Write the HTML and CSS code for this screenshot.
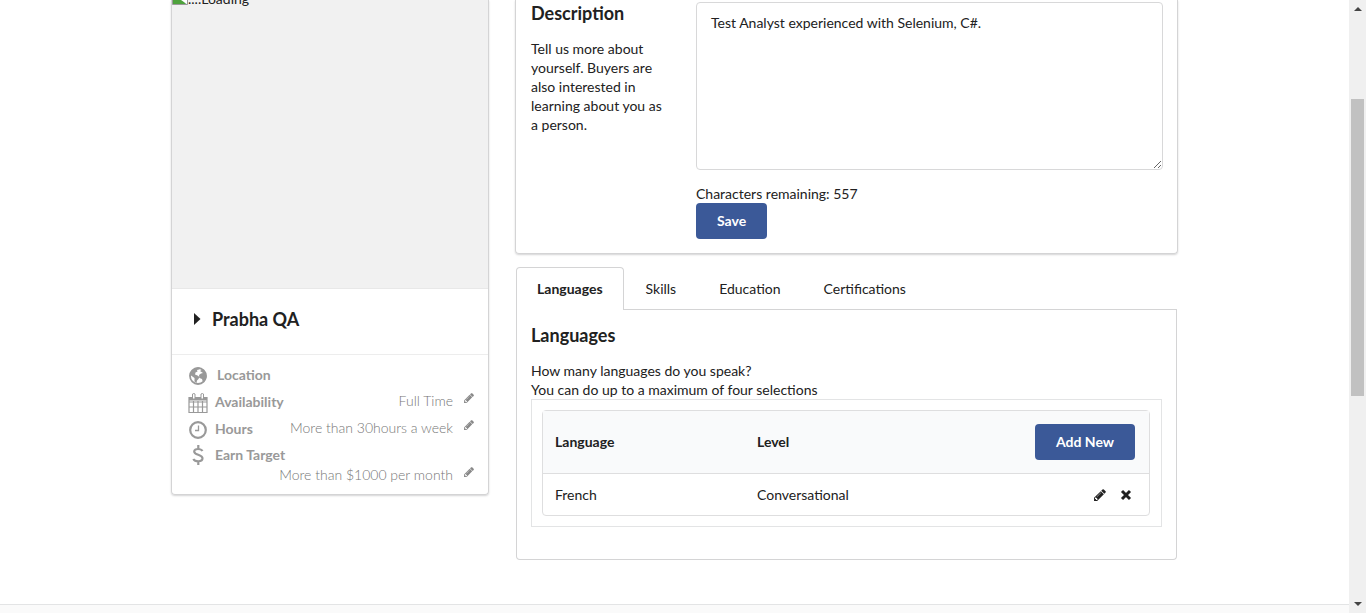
FILE: index.html
```html
<!DOCTYPE html>
<html lang="en">
<head>
<meta charset="utf-8">
<title>Profile</title>
<link rel="stylesheet" href="styles.css">
</head>
<body>
<svg class="defs" width="0" height="0" aria-hidden="true">
  <symbol id="pencil" viewBox="0 1 12.500 12.600"><path fill-rule="evenodd" d="M3.100 12.600l.8-.8L1.800 9.700l-.8.800v1.100h1v1zM7.500 4.750q0-.2-.2-.2l-.1.100L2.900 8.900v.1q0 .2.200.2l.1-.1L7.400 4.900zM7.060 3.250l3.250 3.250L3.250 13.560H0V10.310zM12.400 4q0 .4-.3.700L10.810 6 7.560 2.750l1.300-1.290q.3-.3.700-.3.400 0 .7.300l1.840 1.830q.3.300.3.710z"/></symbol>
</svg>
<div class="page">
  <main class="content">
    <div class="columns">
      <aside class="card">
        <div class="photo">
          <svg class="broken" width="16" height="16" viewBox="0 0 16 16" aria-hidden="true"><path fill="#c4d4ee" stroke="#999" d="M.5.500h15v15H.500z"/><path fill="#4ea23c" d="M1 7l4-2 9 10H1z"/><path fill="#fff" d="M6 9l9 6V9z"/></svg><span>....Loading</span>
        </div>
        <div class="name">
          <svg class="caret" width="7" height="12" viewBox="0 0 7 12" aria-hidden="true"><path d="M0 0l6.500 6L0 12z"/></svg>
          <h2 class="heading">Prabha QA</h2>
        </div>
        <ul class="details">
          <li class="detail">
            <svg class="icon" viewBox="0 0 20 20" aria-hidden="true"><circle cx="10" cy="10" r="8" fill="none" stroke="currentColor" stroke-width="1.800"/><path fill="currentColor" d="M3 5l4-3 5-.5-1 2-2 .5.500 1.500-2 1-.5 2 2.500 1 2 1.500-1 2-1.500 1.500-.5 2.500-2-1.500V12L3 9.500 1.500 10zM12 5l3-2 2.500 3 1.200 5-1.700 4-2 1.500-1-3.500-2.500-1-.5-3 2-1.500 2-.5z"/></svg>
            <strong class="label first">Location</strong>
          </li>
          <li class="detail">
            <svg class="icon" viewBox="0 0 20 20" aria-hidden="true"><path fill="none" stroke="currentColor" stroke-width="1.200" d="M1 4.500h18v15H1zM1 9h18M1 14h18M5.500 8v11M10 8v11M14.500 8v11"/><path fill="currentColor" d="M1 4h18v3.500H1z"/><path fill="#fff" stroke="currentColor" d="M4.500 1q1.500-1 2.500 0v5H4.500zM13 1q1.500-1 2.500 0v5H13z"/></svg>
            <strong class="label">Availability</strong>
            <span class="value">Full Time</span><button class="edit" aria-label="Edit availability"><svg class="pen"><use href="#pencil"/></svg></button>
          </li>
          <li class="detail">
            <svg class="icon" viewBox="0 0 20 20" aria-hidden="true"><circle cx="10" cy="10" r="7.800" fill="none" stroke="currentColor" stroke-width="2.200"/><path fill="none" stroke="currentColor" stroke-width="1.300" d="M10.500 5.500v5H7"/></svg>
            <strong class="label">Hours</strong>
            <span class="value">More than 30hours a week</span><button class="edit" aria-label="Edit hours"><svg class="pen"><use href="#pencil"/></svg></button>
          </li>
          <li class="detail wrap">
            <svg class="icon" viewBox="0 0 20 20" aria-hidden="true"><path fill="none" stroke="currentColor" stroke-width="2.200" d="M14.500 6C13 3.500 6.200 3 6.200 6.500c0 4 8.300 2.500 8.300 6.800 0 4-7.500 3.700-9.200.7M10.300 0v4M10.300 16v4"/></svg>
            <strong class="label">Earn Target</strong>
            <span class="value">More than $1000 per month</span><button class="edit" aria-label="Edit earn target"><svg class="pen"><use href="#pencil"/></svg></button>
          </li>
        </ul>
      </aside>
      <div class="main-column">
        <section class="description">
          <div class="intro">
            <h3 class="heading"><label for="about">Description</label></h3>
            <p class="text">Tell us more about yourself. Buyers are also interested in learning about you as a person.</p>
          </div>
          <div class="editor">
            <textarea class="about" id="about">Test Analyst experienced with Selenium, C#.</textarea>
            <p class="text">Characters remaining: 557</p>
            <button class="button">Save</button>
          </div>
        </section>
        <section class="tabbed">
          <nav class="tabs">
            <a class="tab active" href="#languages">Languages</a>
            <a class="tab" href="#skills">Skills</a>
            <a class="tab" href="#education">Education</a>
            <a class="tab" href="#certifications">Certifications</a>
          </nav>
          <div class="panel" id="languages">
            <h3 class="heading">Languages</h3>
            <p class="text">How many languages do you speak?<br>You can do up to a maximum of four selections</p>
            <div class="frame">
              <table class="table">
                <thead><tr><th class="third">Language</th><th class="third">Level</th><th class="right"><button class="button">Add New</button></th></tr></thead>
                <tbody><tr><td>French</td><td>Conversational</td><td class="right"><div class="actions">
                  <button class="action" aria-label="Edit French"><svg class="glyph"><use href="#pencil"/></svg></button>
                  <button class="action" aria-label="Delete French"><svg class="glyph cross" viewBox="0 0 12 12"><path d="M2 2l8 8M10 2l-8 8"/></svg></button>
                </div></td></tr></tbody>
              </table>
            </div>
          </div>
        </section>
      </div>
    </div>
    <footer class="footer"></footer>
  </main>
  <div class="scrollbar" aria-hidden="true">
    <svg class="arrow" viewBox="0 0 8 4"><path d="M0 4l4-4 4 4z"/></svg>
    <div class="track"><div class="before"></div><div class="thumb"></div><div class="after"></div></div>
    <svg class="arrow" viewBox="0 0 8 4"><path d="M0 0l4 4 4-4z"/></svg>
  </div>
</div>
</body>
</html>
```
FILE: styles.css
```css
* { box-sizing: border-box; }
body { margin: 0; font: 14px/19px Lato, sans-serif; color: #212121; background: #fff; }
.defs { position: absolute; }
button { font: inherit; border: 0; padding: 0; background: none; cursor: pointer; color: inherit; }
.page { display: flex; height: 100vh; overflow: hidden; }
.content { flex: 1; display: flex; flex-direction: column; overflow: hidden; }
.columns { flex: 1; display: grid; grid-template-columns: 318fr 663fr; gap: 26px; align-items: start; width: 100%; max-width: 1007px; margin: 0 auto; }

.card { border: 1px solid #d4d4d5; border-top: 0; border-radius: 0 0 4px 4px; box-shadow: 0 1px 2px #d4d4d5; }
.photo { display: flex; align-items: flex-start; height: 299px; margin-top: -11px; background: #f1f1f1; line-height: 19px; }
.name { display: flex; align-items: center; height: 67px; padding: 0 22px 5px; border-top: 1px solid #e8e8e8; border-bottom: 1px solid #ededed; }
.caret { margin-right: 11px; fill: #212121; }
.heading { margin: 0; font-size: 18px; line-height: 24px; font-weight: 700; }
.details { list-style: none; margin: 0; padding: 6px 14px 6px 16px; color: #999; }
.detail { display: flex; align-items: center; height: 27px; }
.wrap { height: 46px; flex-wrap: wrap; align-content: flex-start; }
.icon { width: 20px; height: 20px; margin: 3px 7px 0 0; }
.label { flex: 1; font-size: 14px; line-height: 20px; }
.first { padding-left: 2px; }
.wrap .label { flex-basis: 80%; margin-top: 3px; }
.value { margin: 0 0 2px auto; line-height: 18px; font-weight: 300; color: #777; }
.edit { margin: 0 0 4px 11px; height: 18px; }
.pen { display: block; width: 10px; height: 10px; margin-bottom: 4px; fill: #888; }

.description { display: grid; grid-template-columns: 135fr 467fr; gap: 30px; padding: 1px 14px 14px 15px; border: 1px solid #d4d4d5; border-top: 0; border-radius: 0 0 4px 4px; box-shadow: 0 1px 2px #d4d4d5; }
.text { margin: 0; }
.intro .text { margin-top: 14px; }
.about { display: block; width: 100%; height: 168px; padding: 10px 14px; margin: 1px 0 14px; border: 1px solid #d8d8d9; border-radius: 4px; font: inherit; color: inherit; resize: vertical; outline: 0; }
.button { display: inline-block; height: 36px; padding: 0 21px 1px; border-radius: 4px; background: #3b5998; color: #fff; font-weight: 700; vertical-align: top; }

.tabbed { margin: 13px 1px 0; }
.tabs { display: flex; border-bottom: 1px solid #d4d4d5; }
.tab { padding: 11px 20px 11px 21px; border: 1px solid transparent; border-bottom: 0; color: inherit; text-decoration: none; }
.active { padding-left: 20px; margin-bottom: -1px; padding-bottom: 12px; border-color: #d4d4d5; border-radius: 4px 4px 0 0; background: #fff; font-weight: 700; }
.panel { padding: 13px 14px 32px; border: 1px solid #d4d4d5; border-top: 0; border-radius: 0 0 4px 4px; }
.panel .text { margin-top: 14px; }
.frame { padding: 10px 11px 10px 10px; border: 1px solid #e3e4e5; }
.table { width: 100%; border: 1px solid #dededf; border-radius: 4px; border-collapse: separate; border-spacing: 0; text-align: left; table-layout: fixed; }
.third { width: 33.333%; }
th { height: 63px; padding: 0 12px 1px; background: #f9fafb; border-bottom: 1px solid #dededf; }
td { height: 41px; padding: 0 12px; }
.table .right { text-align: right; padding-right: 14px; }
.actions { display: flex; justify-content: flex-end; gap: 14px; padding-right: 3px; }
.glyph { display: block; width: 12px; height: 12px; fill: #212121; }
.cross { fill: none; stroke: #212121; stroke-width: 3; }
.footer { height: 9px; border-top: 1px solid #e3e4e5; background: #fafafa; }

.scrollbar { width: 17px; display: flex; flex-direction: column; align-items: center; padding: 7px 0; background: #f0f0f0; }
.arrow { width: 8px; height: 4px; fill: #444; }
.track { flex: 1; display: flex; flex-direction: column; width: 13px; padding: 6px 0; }
.before { flex: 82; }
.thumb { flex: 297; background: #c1c1c1; }
.after { flex: 200; }
```
